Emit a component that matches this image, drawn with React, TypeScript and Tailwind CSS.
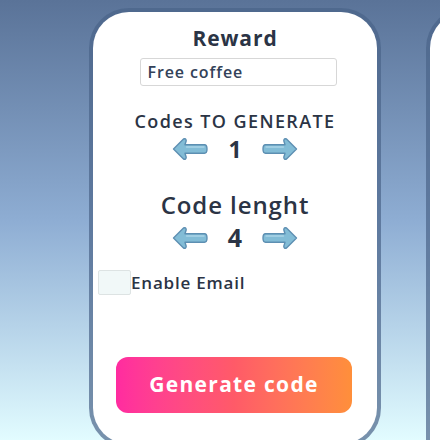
import React from 'react'

function Arrow({ dir }: { dir: 'left' | 'right' }) {
  return (
    <svg
      width="36"
      height="24"
      viewBox="0 0 36 24"
      className={dir === 'right' ? '-scale-x-100' : ''}
    >
      <path
        d="M1.5 12 L11.5 2 Q14 1 14.2 3.8 L13 7.8 L32.5 7.8 Q35 7.8 35 12 Q35 16.2 32.5 16.2 L13 16.2 L14.2 20.2 Q14 23 11.5 22 Z"
        fill="#82bcd6"
        stroke="#5d8fb2"
        strokeWidth="1.4"
        strokeLinejoin="round"
      />
      <path d="M14.5 10 L32 10" stroke="#aad4e7" strokeWidth="1.3" strokeLinecap="round" />
    </svg>
  )
}

function Stepper({ value, size }: { value: string; size: string }) {
  return (
    <div className="flex items-center justify-center gap-[19px]">
      <Arrow dir="left" />
      <span className={`${size} font-bold text-[#2b3445] leading-none w-[16px] text-center`}>{value}</span>
      <Arrow dir="right" />
    </div>
  )
}

export default function App() {
  return (
    <div
      className="w-[440px] h-[440px] overflow-hidden flex bg-gradient-to-b from-[#5a7398] via-[#8eadd3] to-[#e2fcff]"
      style={{ fontFamily: '"Open Sans", "Noto Sans", sans-serif' }}
    >
      {/* main card */}
      <div className="ml-[89px] mt-[8px] w-[292px] h-[440px] shrink-0 rounded-[40px] bg-[#4a6489]/70 p-[4px]">
        <div className="h-full rounded-[36px] bg-white flex flex-col items-center pt-[12px]">
          <h2 className="text-[21px] tracking-[0.9px] font-bold text-[#2b3445] leading-[28px] h-[28px]">Reward</h2>
          <div className="mt-[6px] ml-[6px] w-[197px] h-[28px] border border-[#d7d7d7] rounded-[3px] flex items-center px-[7px]">
            <span className="text-[16px] tracking-[0.9px] font-semibold text-[#334259]">Free coffee</span>
          </div>
          <p className="mt-[23px] text-[18px] tracking-[1.4px] font-semibold text-[#2b3445] leading-[24px]">Codes TO GENERATE</p>
          <div className="mt-[4px]">
            <Stepper value="1" size="text-[23px]" />
          </div>
          <p className="mt-[29px] text-[24px] tracking-[0.9px] font-semibold text-[#2b3445] leading-[30px]">Code lenght</p>
          <div className="mt-[5px]">
            <Stepper value="4" size="text-[25px]" />
          </div>
          <div className="self-start ml-[5px] mt-[20px] flex items-center">
            <div className="w-[33px] h-[25px] bg-[#f1f8f8] border border-[#dde3e3] rounded-[2px]" />
            <span className="text-[17px] tracking-[0.8px] font-semibold text-[#2b3445]">Enable Email</span>
          </div>
          <button className="mt-[61px] mr-[2px] w-[236px] h-[56px] rounded-[12px] bg-gradient-to-r from-[#ff2ba0] via-[#ff5a68] to-[#ff8f3a] text-white text-[21px] tracking-[1.3px] font-bold">
            Generate code
          </button>
        </div>
      </div>
      {/* next card peeking */}
      <div className="ml-[45px] mt-[8px] w-[100px] h-[440px] shrink-0 rounded-tl-[40px] bg-[#4a6489]/70 pl-[4px] pt-[4px]">
        <div className="h-full rounded-tl-[36px] bg-white" />
      </div>
    </div>
  )
}
